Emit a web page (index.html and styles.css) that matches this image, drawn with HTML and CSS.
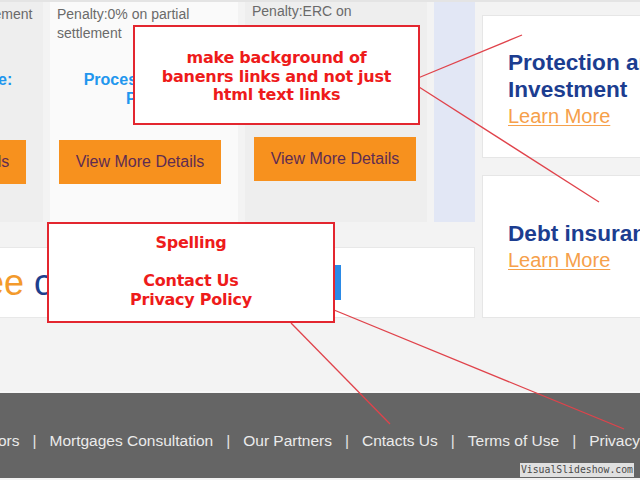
FILE: index.html
```html
<!DOCTYPE html>
<html lang="en">
<head>
<meta charset="utf-8">
<title>Mortgages</title>
<link rel="stylesheet" href="styles.css">
</head>
<body>
<div class="screen">
  <main class="content">
    <section class="left">
      <div class="products">
        <article class="product product--grey">
          <p class="product-terms">Penalty:0.5% on settlement</p>
          <p class="product-fee">Processing Fee:<br>Php0</p>
          <a class="product-btn" href="#">View More Details</a>
        </article>
        <article class="product product--white">
          <p class="product-terms">Penalty:0% on partial settlement</p>
          <p class="product-fee">Processing Fee:<br>Php0</p>
          <a class="product-btn" href="#">View More Details</a>
        </article>
        <article class="product product--grey product--tight">
          <p class="product-terms">Penalty:ERC on prepayment</p>
          <p class="product-fee">Processing Fee:<br>Php0</p>
          <a class="product-btn" href="#">View More Details</a>
        </article>
        <div class="rail"></div>
      </div>
      <div class="promo">
        <h2 class="promo-title"><span class="promo-free">Free</span> <span class="promo-rest">online mortgage advice</span></h2>
        <a class="promo-btn" href="#">Go</a>
      </div>
    </section>
    <aside class="side">
      <div class="side-card">
        <div>
          <h3 class="side-title">Protection and Investment</h3>
          <a class="side-link" href="#">Learn More</a>
        </div>
      </div>
      <div class="side-card side-card--low">
        <div>
          <h3 class="side-title">Debt insurance</h3>
          <a class="side-link" href="#">Learn More</a>
        </div>
      </div>
    </aside>
  </main>
  <footer class="footer">
    <nav class="footer-nav">
      <a href="#">Advisors</a><span class="sep">|</span>
      <a href="#">Mortgages Consultation</a><span class="sep">|</span>
      <a href="#">Our Partners</a><span class="sep">|</span>
      <a href="#">Cntacts Us</a><span class="sep">|</span>
      <a href="#">Terms of Use</a><span class="sep">|</span>
      <a href="#">Privacy Policy</a>
    </nav>
  </footer>

  <svg class="connectors" width="640" height="480" viewBox="0 0 640 480">
    <line x1="418" y1="78" x2="522" y2="35"/>
    <line x1="419" y1="87" x2="599" y2="202"/>
    <line x1="291" y1="323" x2="390" y2="424"/>
    <line x1="334" y1="310" x2="624" y2="429"/>
  </svg>
  <div class="note note--banners">make background of<br>banenrs links and not just<br>html text links</div>
  <div class="note note--spelling">Spelling<br><br>Contact Us<br>Privacy Policy</div>
  <div class="watermark">VisualSlideshow.com</div>
</div>
</body>
</html>
```

FILE: styles.css
```css
* { box-sizing: border-box; }
html, body { margin: 0; padding: 0; }
body {
  background: #f3f3f3;
  font-family: "Liberation Sans", Arial, sans-serif;
}
.screen {
  position: relative;
  width: 640px;
  height: 480px;
  overflow: hidden;
  background: #f3f3f3;
}
p, h2, h3 { margin: 0; }
a { text-decoration: none; }

.content {
  display: flex;
  height: 391px;
  border-top: 2px solid #e4e4e4;
}

/* left area */
.left {
  flex: 0 0 620px;
  margin-left: -145px;
  display: flex;
  flex-direction: column;
}
.products {
  display: grid;
  grid-template-columns: 188px 188px 182px 41px;
  column-gap: 7px;
  height: 220px;
}
.product {
  padding: 3px 4px 0 7px;
  display: flex;
  flex-direction: column;
}
.product--grey { background: #eeeeee; }
.product--white { background: #fafafa; }
.product--tight { padding-top: 0; }
.product-terms {
  font-size: 14px;
  line-height: 19px;
  color: #6a6a6a;
  height: 38px;
  overflow: hidden;
}
.product-fee {
  margin-top: 27px;
  font-size: 16px;
  line-height: 19px;
  font-weight: bold;
  color: #2196ee;
  text-align: center;
}
.product-btn {
  margin-top: 32px;
  margin-left: 2px;
  width: 162px;
  height: 44px;
  display: flex;
  align-items: center;
  justify-content: center;
  background: #f7911e;
  color: #5e2c52;
  font-size: 16px;
}
.product--tight .product-btn { margin-top: 32px; }
.rail { background: #e2e7f5; }

.promo {
  margin-top: 25px;
  height: 71px;
  background: #ffffff;
  border: 1px solid #e8e8e8;
  display: flex;
  align-items: center;
  padding-left: 94px;
}
.promo-title {
  flex: 0 0 317px;
  white-space: nowrap;
  overflow: hidden;
  font-size: 36px;
  font-weight: normal;
  line-height: 40px;
}
.promo-free { color: #f39a2b; }
.promo-rest { color: #1e3f8e; }
.promo-btn {
  margin-left: 24px;
  width: 50px;
  height: 35px;
  background: #2b8ae6;
  color: #fff;
  font-size: 14px;
  display: flex;
  align-items: center;
  justify-content: center;
}

/* right column */
.side {
  flex: 0 0 220px;
  margin-left: 7px;
  margin-top: 13px;
  display: flex;
  flex-direction: column;
  gap: 17px;
}
.side-card {
  height: 143px;
  background: #ffffff;
  border: 1px solid #e6e6e6;
  display: flex;
  align-items: center;
  padding: 4px 26px 0 25px;
}
.side-card--low { padding-top: 0; }
.side-title {
  font-size: 22.6px;
  line-height: 27px;
  font-weight: bold;
  color: #1c3d90;
}
.side-link {
  display: block;
  font-size: 20px;
  line-height: 26px;
  color: #f6a04a;
  text-decoration: underline;
  text-decoration-thickness: 1px;
  text-underline-offset: 2px;
}

/* footer */
.footer {
  height: 87px;
  background: #656565;
  border-top: 2px solid #f7f7f7;
  display: flex;
  align-items: center;
  padding-top: 10px;
}
.footer-nav {
  margin-left: -40px;
  display: flex;
  gap: 13px;
  white-space: nowrap;
  font-size: 15.5px;
  color: #ebebeb;
}
.footer-nav a { color: #ebebeb; }
.sep { color: #e6e6e6; }

/* annotation overlay */
.connectors {
  position: absolute;
  left: 0;
  top: 0;
  pointer-events: none;
}
.connectors line {
  stroke: #e0434b;
  stroke-width: 1.3;
}
.note {
  position: absolute;
  background: #ffffff;
  border: 2px solid #e3262f;
  display: flex;
  align-items: center;
  justify-content: center;
  text-align: center;
  font-family: "DejaVu Sans", sans-serif;
  font-weight: bold;
  font-size: 16px;
  line-height: 18.5px;
  color: #ee1b1b;
  letter-spacing: -0.25px;
}
.note--banners {
  left: 133px;
  top: 25px;
  width: 287px;
  height: 100px;
  padding-top: 4px;
}
.note--spelling {
  left: 47px;
  top: 222px;
  width: 288px;
  height: 101px;
  line-height: 19px;
  padding-bottom: 4px;
}
.watermark {
  position: absolute;
  right: 6px;
  bottom: 3px;
  padding: 0 1px;
  background: #e0e0e0;
  color: #4a4a4a;
  font-family: "DejaVu Sans Mono", monospace;
  font-size: 9.8px;
  line-height: 14px;
}
```
